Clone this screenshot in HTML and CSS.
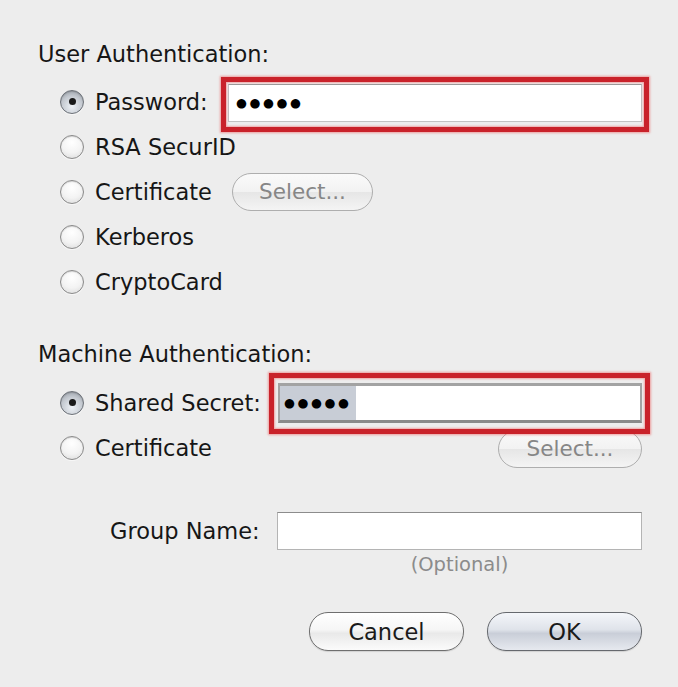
FILE: index.html
```html
<!DOCTYPE html>
<html>
<head>
<meta charset="utf-8">
<link rel="stylesheet" href="styles.css">
</head>
<body>
<div class="dialog">
  <div class="title">User Authentication:</div>
  <div class="opts">
    <div class="row">
      <span class="radio on"></span>
      <span class="lbl lbl-pw">Password:</span>
      <div class="field pw hl"><span class="dots">●●●●●</span></div>
    </div>
    <div class="row"><span class="radio"></span><span class="lbl">RSA SecurID</span></div>
    <div class="row">
      <span class="radio"></span>
      <span class="lbl lbl-cert">Certificate</span>
      <span class="btn sel sel-user">Select...</span>
    </div>
    <div class="row"><span class="radio"></span><span class="lbl">Kerberos</span></div>
    <div class="row"><span class="radio"></span><span class="lbl">CryptoCard</span></div>
  </div>

  <div class="title title2">Machine Authentication:</div>
  <div class="opts">
    <div class="row">
      <span class="radio on"></span>
      <span class="lbl lbl-ss">Shared Secret:</span>
      <div class="field ss hl2"><span class="dots selected">●●●●●</span></div>
    </div>
    <div class="row">
      <span class="radio"></span>
      <span class="lbl">Certificate</span>
      <span class="btn sel sel-mach">Select...</span>
    </div>
  </div>

  <div class="group">
    <span class="lbl">Group Name:</span>
    <div class="field gn"></div>
  </div>
  <div class="optional">(Optional)</div>

  <div class="buttons">
    <span class="btn push">Cancel</span>
    <span class="btn push ok">OK</span>
  </div>
</div>
</body>
</html>
```

FILE: styles.css
```css
html, body {
  margin: 0;
  padding: 0;
}
body {
  width: 678px;
  height: 687px;
  background: #ededed;
  font-family: "DejaVu Sans", "Liberation Sans", sans-serif;
  color: #161616;
  overflow: hidden;
}
.dialog {
  padding: 40px 36px 0 38px;
}
.title {
  height: 28px;
  line-height: 28px;
  font-size: 22.5px;
}
.title2 {
  margin-top: 36px;
}
.opts {
  margin-top: 11px;
  padding-left: 22px;
}
.title2 + .opts {
  margin-top: 12px;
}
.row {
  height: 45px;
  display: flex;
  align-items: center;
}
.lbl {
  font-size: 22.5px;
  line-height: 28px;
  white-space: nowrap;
  flex: none;
}
.lbl-pw { width: 133px; }
.lbl-ss { width: 183px; }
.lbl-cert { width: 137px; }

.radio {
  flex: none;
  width: 22px;
  height: 22px;
  border-radius: 50%;
  border: 1px solid #8a8a8a;
  background: radial-gradient(circle at 50% 30%, #ffffff 0%, #f3f3f3 55%, #d8d8d8 100%);
  box-shadow: inset 0 1px 1px rgba(0,0,0,0.15), 0 1px 0 rgba(255,255,255,0.6);
  margin-right: 11px;
  position: relative;
}
.radio.on {
  border-color: #6c7178;
  background: radial-gradient(circle at 50% 70%, #eef2f7 0%, #c4c9d0 55%, #8e949c 100%);
}
.radio.on::after {
  content: "";
  position: absolute;
  left: 7.5px;
  top: 7.5px;
  width: 7px;
  height: 7px;
  border-radius: 50%;
  background: #1a1a1a;
}

.field {
  flex: 1;
  background: #ffffff;
  box-sizing: border-box;
  display: flex;
  align-items: center;
}
.pw {
  height: 38px;
  margin-top: 3px;
  border: 1px solid #c2c2c2;
  border-top-color: #9a9a9a;
  padding-left: 7px;
}
.ss {
  height: 40px;
  border: 3px solid #a3a3a3;
  border-left-width: 2px;
  border-right-width: 2px;
  border-bottom-color: #8a8a8a;
  padding: 0;
}
.gn {
  height: 38px;
  border: 1px solid #b4b4b4;
  border-top-color: #8c8c8c;
}
.dots {
  font-size: 12.5px;
  letter-spacing: 2.6px;
  color: #000;
  line-height: 20px;
}
.dots.selected {
  background: #c8cdd6;
  height: 100%;
  display: flex;
  align-items: center;
  padding: 0 4px 0 4px;
}

/* red annotation boxes, drawn over the fields */
.hl, .hl2 {
  position: relative;
}
.hl::after, .hl2::after {
  content: "";
  position: absolute;
  border: 5px solid #c9222a;
  box-shadow: 0 0 2px 1px rgba(235, 90, 90, 0.55), inset 0 0 2px 1px rgba(240, 110, 110, 0.55);
  pointer-events: none;
  z-index: 2;
}
.hl::after {
  left: -8px; right: -8px; top: -8px; bottom: -11px;
}
.hl2::after {
  left: -11px; right: -10px; top: -13px; bottom: -14px;
}

.btn {
  flex: none;
  box-sizing: border-box;
  display: flex;
  align-items: center;
  justify-content: center;
  border-radius: 19px;
  white-space: nowrap;
}
.sel {
  height: 38px;
  font-size: 21.5px;
  color: #868686;
  border: 1px solid #aeaeae;
  background: linear-gradient(#fafafa 0%, #f2f2f2 50%, #e6e6e6 51%, #f4f4f4 100%);
}
.sel-user {
  width: 141px;
}
.sel-mach {
  width: 144px;
  margin-left: auto;
  margin-top: 2px;
}

.group {
  margin-top: 42px;
  padding-left: 72px;
  height: 38px;
  display: flex;
  align-items: center;
}
.group .lbl {
  width: 167px;
}
.optional {
  margin-top: 5px;
  padding-left: 239px;
  text-align: center;
  font-size: 19.5px;
  line-height: 20px;
  color: #8b8b8b;
}
.buttons {
  margin-top: 37px;
  display: flex;
  justify-content: flex-end;
  gap: 23px;
}
.push {
  width: 155px;
  height: 39px;
  font-size: 22.5px;
  color: #1a1a1a;
  border: 1px solid #6f6f6f;
  background: linear-gradient(#ffffff 0%, #f6f6f6 45%, #e9e9e9 55%, #fbfbfb 100%);
  box-shadow: 0 1px 1px rgba(0,0,0,0.12);
}
.push.ok {
  background: linear-gradient(#f4f6fa 0%, #dfe3ea 45%, #c9ced8 55%, #e6e9ef 100%);
  border-color: #66696e;
}
```
